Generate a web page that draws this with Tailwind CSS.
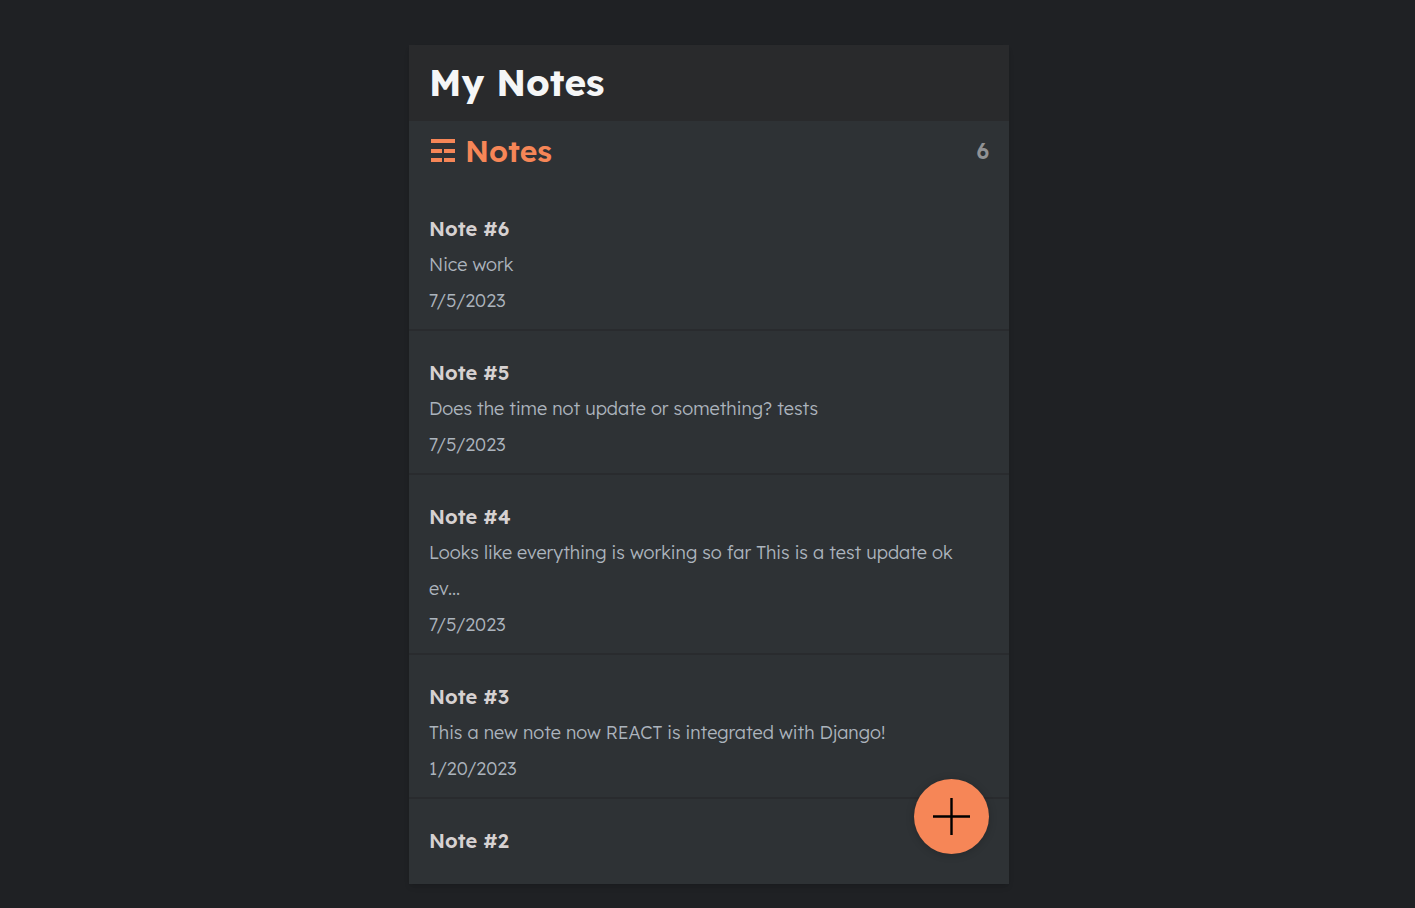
<!DOCTYPE html>
<html lang="en">
<head>
<meta charset="utf-8">
<meta name="viewport" content="width=device-width, initial-scale=1">
<title>My Notes</title>
<script src="https://cdn.jsdelivr.net/npm/@tailwindcss/browser@4"></script>
</head>
<body class="bg-[#1f2124] font-['Lexend','Inter',sans-serif]">
<div class="flex h-screen justify-center pt-[45px] pb-6 pl-[3px]">
  <div class="relative flex w-full max-w-[600px] flex-col bg-[#2e3235] shadow-md">
    <header class="flex h-[76px] shrink-0 items-start bg-[#292a2c] px-5 pt-4">
      <h1 class="text-[37px] leading-[42px] font-bold text-[#f5f6f7]">My Notes</h1>
    </header>
    <main class="flex min-h-0 flex-1 flex-col">
      <div class="flex h-[66px] shrink-0 items-start justify-between px-5 pt-3">
        <h2 class="flex items-center gap-[10px] pl-[2px] text-[30px] leading-9 font-semibold text-[#f68657]">
          <svg class="h-6 w-6" viewBox="0 0 24 24" fill="currentColor" aria-hidden="true"><path d="M0 0h24v4H0zM0 10h11v4H0zM13 10h11v4H13zM0 19h11v4H0zM13 19h11v4H13z"/></svg>
          Notes
        </h2>
        <p class="text-[22px] leading-9 font-semibold text-[#919294]">6</p>
      </div>
      <div class="min-h-0 flex-1 overflow-hidden text-[18px] leading-9 font-[350] text-[#acb4bd]">
        <a href="#note-6" class="block border-b-2 border-[#292b2e] px-5 pt-6 pb-[10px]">
          <h3 class="text-[20px] leading-9 font-semibold text-[#d6d1d1]">Note #6</h3>
          <p class="pr-2">Nice work</p>
          <p>7/5/2023</p>
        </a>
        <a href="#note-5" class="block border-b-2 border-[#292b2e] px-5 pt-6 pb-[10px]">
          <h3 class="text-[20px] leading-9 font-semibold text-[#d6d1d1]">Note #5</h3>
          <p class="pr-2">Does the time not update or something? tests</p>
          <p>7/5/2023</p>
        </a>
        <a href="#note-4" class="block border-b-2 border-[#292b2e] px-5 pt-6 pb-[10px]">
          <h3 class="text-[20px] leading-9 font-semibold text-[#d6d1d1]">Note #4</h3>
          <p class="pr-2">Looks like everything is working so far This is a test update ok ev...</p>
          <p>7/5/2023</p>
        </a>
        <a href="#note-3" class="block border-b-2 border-[#292b2e] px-5 pt-6 pb-[10px]">
          <h3 class="text-[20px] leading-9 font-semibold text-[#d6d1d1]">Note #3</h3>
          <p class="pr-2">This a new note now REACT is integrated with Django!</p>
          <p>1/20/2023</p>
        </a>
        <a href="#note-2" class="block px-5 pt-6">
          <h3 class="text-[20px] leading-9 font-semibold text-[#d6d1d1]">Note #2</h3>
        </a>
      </div>
    </main>
    <button type="button" aria-label="Add note" class="absolute right-5 bottom-[30px] flex size-[75px] items-center justify-center rounded-full bg-[#f68657] text-black shadow-[0_1px_8px_rgba(0,0,0,0.2)]">
      <svg class="size-[37px]" viewBox="0 0 37 37" fill="none" stroke="currentColor" stroke-width="2.4" aria-hidden="true"><path d="M18.5 0v37M0 18.5h37"/></svg>
    </button>
  </div>
</div>
</body>
</html>
